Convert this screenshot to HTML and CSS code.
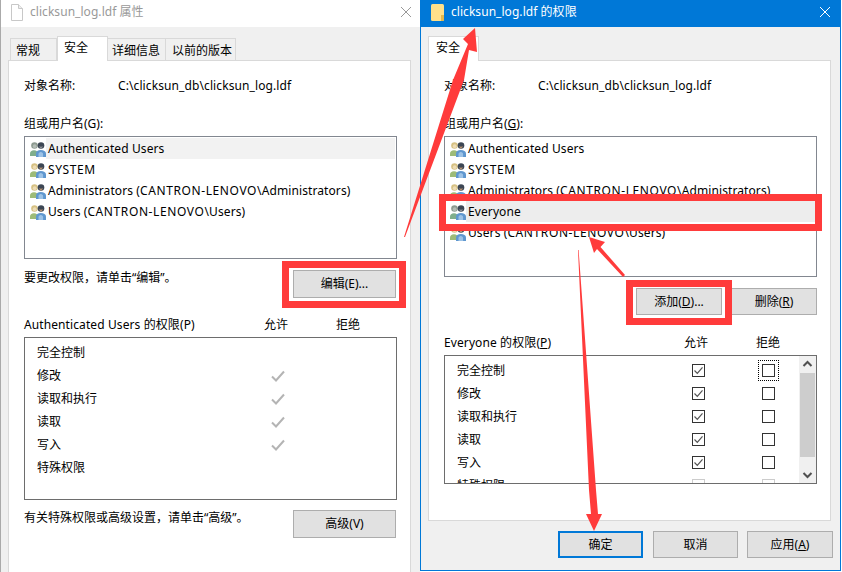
FILE: index.html
```html
<!DOCTYPE html>
<html lang="zh-CN">
<head>
<meta charset="utf-8">
<title>clicksun_log.ldf</title>
<link rel="stylesheet" href="styles.css">
</head>
<body>
<svg class="defs" width="0" height="0">
  <symbol id="people" viewBox="0 0 16 16">
    <path d="M0 15v-2.500c0-2 1.500-3.300 4-3.300s4 1.300 4 3.300v2.500z" fill="#9dbb78"/>
    <circle cx="4.500" cy="4.500" r="3.300" fill="#d6c184"/>
    <circle cx="4.700" cy="5.200" r="1.900" fill="#eedcb4"/>
    <path d="M6 16v-3.500c0-2.300 1.800-3.500 4.800-3.500s5.200 1.200 5.200 3.500v3.500z" fill="#5f97cf"/>
    <path d="M8.500 16v-3c0-1 1-2 2.300-2s2.300 1 2.300 2v3z" fill="#9cc2e6"/>
    <circle cx="11" cy="4.500" r="3.300" fill="#3c4654"/>
    <path d="M9.300 5c0.800 0.900 2.600 0.900 3.400 0-0.100 1.600-0.900 2.500-1.700 2.500s-1.600-0.900-1.700-2.500z" fill="#b58f6e"/>
  </symbol>
  <symbol id="people-sel" viewBox="0 0 16 16">
    <path d="M0 15v-2.500c0-2 1.500-3.300 4-3.300s4 1.300 4 3.300v2.500z" fill="#7fae8c"/>
    <circle cx="4.500" cy="4.500" r="3.300" fill="#8d9a90"/>
    <circle cx="4.700" cy="5.200" r="1.900" fill="#b4bdb6"/>
    <path d="M6 16v-3.500c0-2.300 1.800-3.500 4.800-3.500s5.200 1.200 5.200 3.500v3.500z" fill="#5f97cf"/>
    <path d="M8.500 16v-3c0-1 1-2 2.300-2s2.300 1 2.300 2v3z" fill="#9cc2e6"/>
    <circle cx="11" cy="4.500" r="3.300" fill="#3c4654"/>
    <path d="M9.300 5c0.800 0.900 2.600 0.900 3.400 0-0.100 1.600-0.900 2.500-1.700 2.500s-1.600-0.900-1.700-2.500z" fill="#8b8f96"/>
  </symbol>
  <symbol id="tick" viewBox="0 0 16 16">
    <path d="M2 8.500l4 4 8-9" fill="none" stroke="currentColor" stroke-width="2"/>
  </symbol>
  <symbol id="tick-thin" viewBox="0 0 11 11">
    <path d="M1.500 5.500l2.800 2.800 5.200-6" fill="none" stroke="currentColor" stroke-width="1.200"/>
  </symbol>
</svg>

<section class="window window-left">
  <header class="title title-inactive">
    <svg class="title-icon" viewBox="0 0 12 17"><path d="M0.500 0.500h7l4 4v12h-11z" fill="#fff" stroke="#c8c8c8"/><path d="M7.500 0.500v4h4" fill="#eee" stroke="#c8c8c8"/></svg>
    <span class="title-text">clicksun_log.ldf 属性</span>
    <svg class="close" viewBox="0 0 10 10"><path d="M0 0l10 10M10 0l-10 10" stroke="currentColor" fill="none"/></svg>
  </header>
  <div class="body">
    <nav class="tabs">
      <span class="tab tab-1">常规</span>
      <span class="tab tab-active tab-2">安全</span>
      <span class="tab tab-3">详细信息</span>
      <span class="tab tab-4">以前的版本</span>
    </nav>
    <div class="panel panel-left">
      <div class="object"><span class="object-label">对象名称:</span><span class="path">C:\clicksun_db\clicksun_log.ldf</span></div>
      <div class="group-label">组或用户名(G):</div>
      <ul class="list list-left">
        <li class="user user-sel"><svg class="people"><use href="#people-sel"/></svg><span class="user-name">Authenticated Users</span></li>
        <li class="user"><svg class="people"><use href="#people"/></svg><span class="user-name"><span class="caps">SYSTEM</span></span></li>
        <li class="user"><svg class="people"><use href="#people"/></svg><span class="user-name">Administrators (<span class="caps">CANTRON-LENOVO</span>\Administrators)</span></li>
        <li class="user"><svg class="people"><use href="#people"/></svg><span class="user-name">Users (<span class="caps">CANTRON-LENOVO</span>\Users)</span></li>
      </ul>
      <div class="action action-edit">
        <span class="note">要更改权限，请单击“编辑”。</span>
        <button class="btn btn-wide">编辑(E)...</button>
      </div>
      <div class="perm-head perm-head-left"><span class="latin">Authenticated Users 的权限(P)</span><span class="c">允许</span><span class="c">拒绝</span></div>
      <div class="perms perms-left">
        <div class="perm"><span>完全控制</span></div>
        <div class="perm"><span>修改</span><svg class="tick"><use href="#tick"/></svg></div>
        <div class="perm"><span>读取和执行</span><svg class="tick"><use href="#tick"/></svg></div>
        <div class="perm"><span>读取</span><svg class="tick"><use href="#tick"/></svg></div>
        <div class="perm"><span>写入</span><svg class="tick"><use href="#tick"/></svg></div>
        <div class="perm"><span>特殊权限</span></div>
      </div>
      <div class="action action-adv">
        <span class="note">有关特殊权限或高级设置，请单击“高级”。</span>
        <button class="btn btn-wide">高级(V)</button>
      </div>
    </div>
  </div>
</section>

<section class="window window-right">
  <header class="title title-active">
    <svg class="title-icon title-icon-folder" viewBox="0 0 13 17"><path d="M0 1.500q0-1.500 1.500-1.500h10q1.500 0 1.500 1.500v14q0 1.500-1.500 1.500h-10q-1.500 0-1.500-1.500z" fill="#ffe08a"/><path d="M10 17v-6h3v4.500q0 1.500-1.500 1.500z" fill="#e6b84a"/></svg>
    <span class="title-text">clicksun_log.ldf 的权限</span>
    <svg class="close" viewBox="0 0 10 10"><path d="M0 0l10 10M10 0l-10 10" stroke="currentColor" fill="none"/></svg>
  </header>
  <div class="body">
    <nav class="tabs tabs-right">
      <span class="tab tab-active tab-solo">安全</span>
    </nav>
    <div class="panel panel-right">
      <div class="object"><span class="object-label">对象名称:</span><span class="path">C:\clicksun_db\clicksun_log.ldf</span></div>
      <div class="group-label">组或用户名(<u>G</u>):</div>
      <ul class="list list-right">
        <li class="user"><svg class="people"><use href="#people"/></svg><span class="user-name">Authenticated Users</span></li>
        <li class="user"><svg class="people"><use href="#people"/></svg><span class="user-name"><span class="caps">SYSTEM</span></span></li>
        <li class="user"><svg class="people"><use href="#people"/></svg><span class="user-name">Administrators (<span class="caps">CANTRON-LENOVO</span>\Administrators)</span></li>
        <li class="user user-sel user-sel-strong"><svg class="people"><use href="#people-sel"/></svg><span class="user-name">Everyone</span></li>
        <li class="user"><svg class="people"><use href="#people"/></svg><span class="user-name">Users (<span class="caps">CANTRON-LENOVO</span>\Users)</span></li>
      </ul>
      <div class="list-actions">
        <button class="btn btn-mid">添加(<u>D</u>)...</button>
        <button class="btn btn-mid">删除(<u>R</u>)</button>
      </div>
      <div class="perm-head perm-head-right"><span class="latin">Everyone 的权限(<u>P</u>)</span><span class="c">允许</span><span class="c">拒绝</span></div>
      <div class="perms perms-right">
        <div class="perm"><span>完全控制</span><span class="box"><svg class="tick-thin"><use href="#tick-thin"/></svg></span><span class="box box-focus"></span></div>
        <div class="perm"><span>修改</span><span class="box"><svg class="tick-thin"><use href="#tick-thin"/></svg></span><span class="box"></span></div>
        <div class="perm"><span>读取和执行</span><span class="box"><svg class="tick-thin"><use href="#tick-thin"/></svg></span><span class="box"></span></div>
        <div class="perm"><span>读取</span><span class="box"><svg class="tick-thin"><use href="#tick-thin"/></svg></span><span class="box"></span></div>
        <div class="perm"><span>写入</span><span class="box"><svg class="tick-thin"><use href="#tick-thin"/></svg></span><span class="box"></span></div>
        <div class="perm"><span>特殊权限</span><span class="box box-off"></span><span class="box box-off"></span></div>
        <div class="scrollbar">
          <svg class="sb-arrow" viewBox="0 0 15 17"><path d="M3.500 10l4-4 4 4" fill="none" stroke="#505050" stroke-width="2"/></svg>
          <div class="sb-track"><div class="sb-thumb"></div></div>
          <svg class="sb-arrow" viewBox="0 0 15 17"><path d="M3.500 7l4 4 4-4" fill="none" stroke="#505050" stroke-width="2"/></svg>
        </div>
      </div>
    </div>
    <div class="dialog-actions">
      <button class="btn btn-dialog btn-default">确定</button>
      <button class="btn btn-dialog">取消</button>
      <button class="btn btn-dialog">应用(<u>A</u>)</button>
    </div>
  </div>
</section>

<div class="mark mark-edit"></div>
<div class="mark mark-everyone"></div>
<div class="mark mark-add"></div>

<svg class="arrows" viewBox="0 0 842 572" width="842" height="572">
  <polygon points="404,237 405,237 464,80 469,50 477,52 475,28 463,39 468,44 453,80"/>
  <polygon points="589,237 605,242 600.500,247 625,275 623,277 597,249 594,253"/>
  <polygon points="578,250 578.600,250 596,490 598,514 602,514 594,531 586,514 591,514 589,490"/>
</svg>
</body>
</html>
```
FILE: styles.css
```css
* { box-sizing: border-box; }
html, body { margin: 0; padding: 0; }
body {
  width: 842px;
  height: 572px;
  position: relative;
  overflow: hidden;
  background: #fff;
  font: 12px/16px "Noto Sans", "Noto Sans CJK SC", sans-serif;
  color: #000;
}
.defs { position: absolute; }
u { text-underline-offset: 1px; }

.window {
  position: absolute;
  top: 0;
  display: flex;
  flex-direction: column;
  background: #f0f0f0;
}
.window-left {
  left: 0;
  width: 420px;
  height: 572px;
  border-left: 1px solid #aaa;
}
.window-right {
  left: 420px;
  width: 421px;
  height: 571px;
  border: 1px solid #0078d7;
  border-top: 0;
}

.title {
  height: 27px;
  flex: none;
  display: flex;
  align-items: center;
  padding-bottom: 3px;
}
.title-inactive { background: #fff; color: #999; padding-left: 10px; padding-right: 9px; }
.title-active { background: #0078d7; color: #fff; padding-left: 10px; padding-right: 10px; }
.title-icon { width: 12px; height: 17px; flex: none; }
.title-icon-folder { width: 13px; }
.title-text { margin-left: 7px; flex: 1; letter-spacing: 0.05px; }
.close { width: 10px; height: 10px; flex: none; }

.body { flex: 1; display: flex; flex-direction: column; padding: 9px 9px 0 7px; min-height: 0; }

.tabs {
  display: flex;
  align-items: flex-end;
  height: 24px;
  padding-left: 2px;
  flex: none;
}
.tabs-right { padding-left: 0; }
.tab {
  height: 22px;
  border: 1px solid #d9d9d9;
  border-left: 0;
  border-bottom: 0;
  background: #f0f0f0;
  padding: 4px 0 0 6px;
  flex: none;
}
.tab-1 { width: 47px; border-left: 1px solid #d9d9d9; padding-left: 5px; }
.tab-3 { width: 58px; padding-left: 4px; }
.tab-4 { width: 70px; }
.tab-active {
  height: 25px;
  margin-bottom: -1px;
  background: #fff;
  border: 1px solid #d9d9d9;
  border-bottom: 0;
  padding: 3px 0 0 6px;
  position: relative;
}
.tab-2 { width: 51px; }
.tab-solo { width: 51px; padding-left: 7px; }

.panel {
  background: #fff;
  border: 1px solid #d9d9d9;
  padding: 17px 12px 0 15px;
  display: flex;
  flex-direction: column;
}
.panel-left { flex: 1; border-bottom: 0; }
.panel-right { height: 461px; flex: none; }

.object { display: flex; height: 16px; }
.object-label { width: 94px; flex: none; }
.path { letter-spacing: 0.1px; }
.group-label { margin-top: 22px; margin-bottom: -1px; }

.list {
  list-style: none;
  margin: 5px 0 0;
  padding: 1px 1px 0 5px;
  border: 1px solid #828790;
  width: 373px;
  overflow: hidden;
}
.list-left { height: 123px; }
.list-right { height: 141px; }
.user { display: flex; height: 21px; align-items: center; }
.people { width: 16px; height: 16px; flex: none; }
.user-name { flex: 1; height: 21px; line-height: 21px; padding-left: 2px; white-space: nowrap; letter-spacing: 0.1px; }
.caps { letter-spacing: 0.6px; }
.user-sel .user-name { background: #f2f2f2; }
.user-sel-strong .user-name { background: #ededed; }

.action { display: flex; justify-content: space-between; width: 372px; }
.action-edit { margin-top: 11px; }
.action-adv { margin-top: 10px; }

.btn {
  font: inherit;
  color: #000;
  background: #e1e1e1;
  border: 1px solid #adadad;
  padding: 0;
  flex: none;
  border-radius: 0;
}
.btn-wide { width: 103px; height: 28px; }
.btn-mid { width: 86px; height: 27px; }
.btn-dialog { width: 85px; height: 27px; }
.btn-default { border: 2px solid #0078d7; }

.list-actions { display: flex; justify-content: flex-end; gap: 9px; width: 373px; margin-top: 11px; }

.perm-head {
  display: grid;
  grid-template-columns: 200px 40px 40px;
  column-gap: 32px;
  height: 16px;
}
.perm-head-left { margin-top: 19px; margin-bottom: -1px; }
.perm-head-right { margin-top: 20px; }
.latin { white-space: nowrap; letter-spacing: 0.1px; }
.c { text-align: center; }

.perms {
  position: relative;
  width: 373px;
  margin-top: 5px;
  border: 1px solid #6d6d6d;
  padding-top: 3px;
  overflow: hidden;
}
.perms-left { height: 163px; }
.perms-right { height: 129px; margin-top: 4px; }
.perm {
  display: grid;
  grid-template-columns: 191px 40px 40px;
  column-gap: 30px;
  height: 23px;
  align-items: center;
  padding-left: 12px;
  justify-items: center;
}
.perm > span:first-child { justify-self: start; white-space: nowrap; }
.tick { width: 16px; height: 16px; color: #b4b4b4; }

.box {
  width: 13px;
  height: 13px;
  border: 1px solid #333;
  background: #fff;
  display: block;
}
.tick-thin { display: block; width: 11px; height: 11px; color: #555; }
.box-focus { outline: 1px dotted #000; outline-offset: 3px; }
.box-off { border-color: #ccc; }

.scrollbar {
  position: absolute;
  top: 0;
  right: 0;
  bottom: 0;
  width: 17px;
  background: #f0f0f0;
  display: flex;
  flex-direction: column;
  padding: 0 1px;
}
.sb-arrow { width: 15px; height: 17px; flex: none; }
.sb-track { flex: 1; }
.sb-thumb { height: 84px; background: #cdcdcd; }

.dialog-actions {
  display: flex;
  justify-content: flex-end;
  gap: 10px;
  margin-top: 10px;
  margin-right: -2px;
}
.dialog-actions .btn:last-child { margin-left: -1px; width: 86px; }

.mark { position: absolute; border: 7px solid #ff3b3b; }
.mark-edit { left: 282px; top: 261px; width: 124px; height: 47px; }
.mark-everyone { left: 439px; top: 194px; width: 383px; height: 37px; }
.mark-add { left: 626px; top: 280px; width: 106px; height: 45px; }

.arrows { position: absolute; left: 0; top: 0; fill: #ff3b3b; }
```
